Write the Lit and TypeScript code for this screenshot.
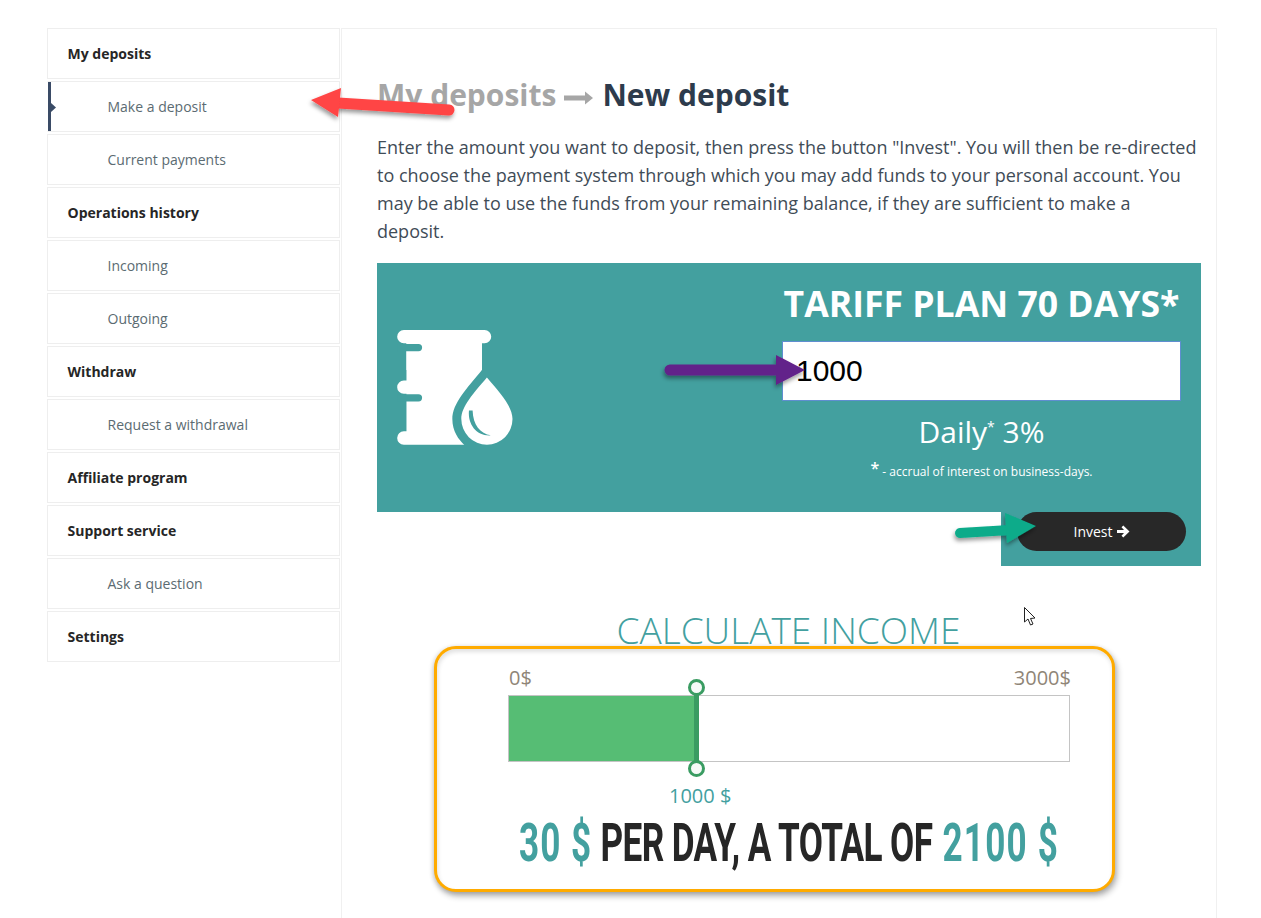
import { LitElement, html, css } from "lit";
import { customElement } from "lit/decorators.js";

const items: [string, boolean, boolean?][] = [
  ["My deposits", true],
  ["Make a deposit", false, true],
  ["Current payments", false],
  ["Operations history", true],
  ["Incoming", false],
  ["Outgoing", false],
  ["Withdraw", true],
  ["Request a withdrawal", false],
  ["Affiliate program", true],
  ["Support service", true],
  ["Ask a question", false],
  ["Settings", true],
];

@customElement("app-root")
export class AppRoot extends LitElement {
  static styles = css`
    :host { display: block; position: relative; width: 1261px; height: 918px; overflow: hidden; background: #fff; font-family: "Open Sans", sans-serif; color: #3c4a56; }
    .page { display: flex; gap: 1px; padding: 28px 0 0 47px; height: 890px; box-sizing: border-box; }
    .side { width: 293px; display: flex; flex-direction: column; gap: 2px; flex: none; }
    .item { position: relative; height: 51px; box-sizing: border-box; border: 1px solid #eeeeee; display: flex; align-items: center; font-size: 14px; padding-left: 59.500px; color: #5b6b72; }
    .item.head { padding-left: 19.500px; font-weight: 700; color: #262626; }
    .item.active { border-left-color: transparent; }
    .item.active::before { content: ""; position: absolute; left: 0; top: 0; bottom: 0; width: 3px; background: #3a4b66; }
    .item.active::after { content: ""; position: absolute; left: 3px; top: 21px; width: 5px; height: 9px; background: #3a4b66; clip-path: polygon(0 0, 100% 50%, 0 100%); }
    .main { width: 876px; box-sizing: border-box; border: 1px solid #f0f0f0; border-bottom: 0; padding: 44px 15px 0 35px; height: 890px; }
    h1 { margin: 0; font-size: 30px; line-height: 44px; font-weight: 700; color: #2d3b4c; }
    h1 .crumb { color: #a6a6a6; }
    h1 .sep { display: inline-block; vertical-align: 1px; margin: 0 9px 0 8px; }
    p { margin: 16px 0 0; font-size: 18px; line-height: 28px; color: #3f4c57; width: 824px; }
    .plan { margin-top: 18px; height: 249px; background: #43a09f; display: flex; justify-content: space-between; color: #fff; padding: 0 20px; box-sizing: border-box; }
    .barrel { width: 116px; height: 115px; margin-top: 67px; flex: none; }
    .form { width: 399px; display: flex; flex-direction: column; align-items: center; }
    .form h2 { margin: 17px 0 0; font-size: 35.600px; line-height: 46px; font-weight: 700; white-space: nowrap; }
    .amount { width: 399px; height: 60px; box-sizing: border-box; margin-top: 15px; background: #fff; border: 1px solid #5f8ed0; color: #000; font: 30px/58px "Liberation Sans", sans-serif; padding-left: 13px; }
    .daily { margin-top: 11px; font-size: 30px; line-height: 40px; }
    .daily sup { font-size: 14px; line-height: 0; }
    .note { margin-top: 10px; font-size: 12px; line-height: 20px; font-weight: 400; }
    .note b { font-size: 16px; vertical-align: 2px; line-height: 0; font-weight: 600; }
    .actions { display: flex; justify-content: flex-end; }
    .band { width: 200px; height: 54px; background: #43a09f; box-sizing: border-box; padding-left: 16px; }
    .btn { width: 169px; height: 39px; border-radius: 20px; background: #282828; color: #fff; font-size: 14px; display: flex; align-items: center; justify-content: center; gap: 4px; }
    .calc { position: relative; width: 824px; }
    .calc h3 { margin: 41px 0 0; text-align: center; font-size: 37px; line-height: 46px; font-weight: 300; color: #43a09f; margin-right: 1px; }
    .box { position: relative; margin: -7px 0 0 57px; width: 681px; height: 246px; box-sizing: border-box; border: 3px solid #ffab00; border-radius: 22px; box-shadow: 2px 4px 6px rgba(0,0,0,.3), -1px 1px 5px rgba(0,0,0,.15), inset 1px 3px 4px rgba(0,0,0,.12); background: #fff; }
    .limits { display: flex; justify-content: space-between; padding: 17px 41px 0 72px; font-size: 20px; line-height: 24px; color: #8f8577; }
    .track { position: relative; margin: 5px 0 0 71px; width: 562px; height: 67px; box-sizing: border-box; border: 1px solid #c4c4c4; }
    .fill { height: 100%; background: #56bd74; width: 186px; }
    .thumb { position: absolute; left: 185px; top: -1px; bottom: -1px; width: 5px; background: #3a9c62; }
    .knob { position: absolute; left: 179px; width: 17px; height: 17px; box-sizing: border-box; border: 3px solid #3a9c62; border-radius: 50%; background: #f6faf8; }
    .knob.top { top: -17px; }
    .knob.bot { bottom: -16px; }
    .val { margin: 22px 0 0 232px; width: 62px; text-align: center; white-space: nowrap; font-size: 20px; line-height: 24px; color: #43a09f; }
    .total { margin: 4px 0 0 82px; white-space: nowrap; width: 770px; transform-origin: 0 50%; transform: scaleX(.65); font: 700 54px/62px Roboto, sans-serif; color: #262626; letter-spacing: -.9px; }
    .total span { color: #43a09f; letter-spacing: 1.600px; }
    .total span.last { letter-spacing: 1.900px; margin-left: 3px; }
    .over { position: absolute; left: 0; top: 0; pointer-events: none; }
  `;

  render() {
    return html`
      <div class="page">
        <nav class="side">
          ${items.map(([t, h, a]) => html`<div class="item ${h ? "head" : ""} ${a ? "active" : ""}">${t}</div>`)}
        </nav>
        <main class="main">
          <h1><span class="crumb">My deposits</span><svg class="sep" width="29" height="14" viewBox="0 0 29 14"><path d="M0 4.500h21V.500l8 6.500-8 6.500v-4H0z" fill="#a6a6a6"/></svg>New deposit</h1>
          <p>Enter the amount you want to deposit, then press the button "Invest". You will then be re-directed to choose the payment system through which you may add funds to your personal account. You may be able to use the funds from your remaining balance, if they are sufficient to make a deposit.</p>
          <section class="plan">
            <svg class="barrel" viewBox="60 210 348 346">
              <path fill="#fff" d="M80 210h243a20 20 0 0 1 0 40h-8v80h-227v-80h-8a20 20 0 0 1 0-40z"/>
              <path fill="#fff" d="M88 250h227v305H88z M80 362h10v40H80a20 20 0 0 1 0-40z M80 515h10v40H80a20 20 0 0 1 0-40z"/>
              <path fill="#43a09f" d="M60 252h64a11 11 0 0 1 0 22H60z M60 403h64a11 11 0 0 1 0 22H60z"/>
              <path fill="#43a09f" d="M315 330 C 270 385 226 430 226 478 C226 515 245 540 262 556 H420 V330z"/>
              <path fill="#fff" d="M330 353C370 400 407 440 407 478A77 77 0 0 1 253 478C253 440 290 400 330 353Z"/>
              <path fill="#43a09f" d="M276 452C272 495 300 530 342 527C310 522 288 495 287 452Z"/>
            </svg>
            <div class="form">
              <h2>TARIFF PLAN 70 DAYS*</h2>
              <div class="amount">1000</div>
              <div class="daily">Daily<sup>*</sup> 3%</div>
              <div class="note"><b>*</b> - accrual of interest on business-days.</div>
            </div>
          </section>
          <div class="actions"><div class="band"><div class="btn">Invest
            <svg width="13" height="13" viewBox="0 0 13 13"><path d="M0 5h7L4.500 2.300 6.300.5 12.500 6.500 6.300 12.500 4.500 10.700 7 8H0z" fill="#fff"/></svg>
          </div></div></div>
          <section class="calc">
            <h3>CALCULATE INCOME</h3>
            <div class="box">
              <div class="limits"><span>0$</span><span>3000$</span></div>
              <div class="track"><div class="fill"></div><div class="thumb"></div><div class="knob top"></div><div class="knob bot"></div></div>
              <div class="val">1000 $</div>
              <div class="total"><span>30 $</span> PER DAY, A TOTAL OF <span class="last">2100 $</span></div>
            </div>
          </section>
        </main>
      </div>
      <svg class="over" width="1261" height="918" viewBox="0 0 1261 918">
        <defs><filter id="s" x="-20%" y="-50%" width="140%" height="200%"><feDropShadow dx="-1" dy="3" stdDeviation="2" flood-color="#000" flood-opacity=".4"/></filter></defs>
        <g filter="url(#s)">
          <path d="M338 103 L449 110" stroke="#ff4444" stroke-width="11" stroke-linecap="round"/>
          <path d="M311 100 L341 88 L338 117Z" fill="#ff4444"/>
        </g>
        <g filter="url(#s)">
          <path d="M670 370 H780" stroke="#62218a" stroke-width="11" stroke-linecap="round"/>
          <path d="M776 355 L805 370 L776 385Z" fill="#62218a"/>
        </g>
        <g filter="url(#s)">
          <path d="M960 533 L1010 530" stroke="#0aab8a" stroke-width="10" stroke-linecap="round"/>
          <path d="M1005 513 L1036 526 L1007 543Z" fill="#0aab8a"/>
        </g>
        <path d="M1024.500 607.500 V622 L1028 619 L1030.500 625 L1033 624 L1030.500 618.500 L1035 618Z" fill="#fff" stroke="#222" stroke-width="1"/>
      </svg>
    `;
  }
}
